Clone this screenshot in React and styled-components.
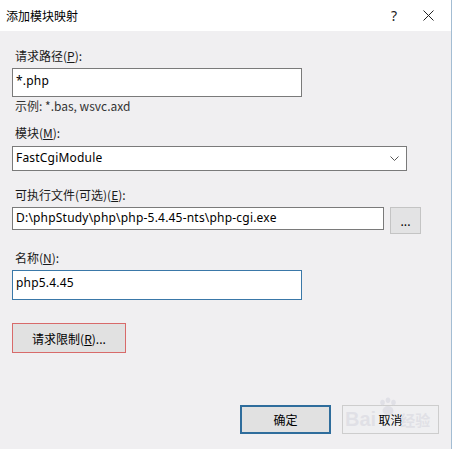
import React from "react";
import styled, { createGlobalStyle } from "styled-components";

const GlobalStyle = createGlobalStyle`
  html, body {
    margin: 0;
    padding: 0;
    background: #ffffff;
  }
  body {
    font-family: "Noto Sans", "Noto Sans CJK SC", sans-serif;
    font-size: 12px;
    color: #000;
  }
`;

const Window = styled.div`
  width: 451px;
  height: 449px;
  background: #f0eff1;
  border-right: 1px solid #a3bdd3;
  display: flex;
  flex-direction: column;
`;

const TitleBar = styled.div`
  height: 31px;
  background: #ffffff;
  display: flex;
  align-items: center;
  padding-left: 6px;
  box-sizing: border-box;
`;

const Title = styled.div`
  flex: 1;
  font-size: 12px;
  font-family: "Noto Sans CJK SC", sans-serif;
`;

const TitleButton = styled.div`
  width: ${(p) => p.$w}px;
  display: flex;
  justify-content: center;
  font-size: 14px;
  color: #222;
`;

const Body = styled.div`
  padding-left: 12px;
  display: flex;
  flex-direction: column;
  align-items: flex-start;
`;

const Label = styled.div`
  margin-top: ${(p) => p.$top}px;
  padding-left: 3px;
  line-height: 16px;
  font-family: "Noto Sans CJK SC", sans-serif;
  color: #1a1a1a;
  u {
    text-decoration: underline;
  }
`;

const Hint = styled(Label)`
  color: #333;
`;

const Field = styled.div`
  margin-top: ${(p) => p.$top || 0}px;
  width: ${(p) => p.$w}px;
  height: ${(p) => p.$h}px;
  box-sizing: border-box;
  background: #fff;
  border: 1px solid ${(p) => (p.$focus ? "#3a78a8" : "#7a7a7a")};
  padding: ${(p) => p.$pt || 3}px 0 0 3px;
  line-height: 16px;
  white-space: nowrap;
  display: flex;
  align-items: flex-start;
`;

const FieldText = styled.span`
  flex: 1;
  letter-spacing: 0.2px;
`;

const Chevron = styled.svg`
  width: 9px;
  height: 6px;
  margin: 6px 7px 0 0;
`;

const Row = styled.div`
  margin-top: ${(p) => p.$top}px;
  display: flex;
  align-items: flex-start;
  gap: 6px;
`;

const Button = styled.div`
  margin-top: ${(p) => p.$top || 0}px;
  width: ${(p) => p.$w}px;
  height: ${(p) => p.$h}px;
  box-sizing: border-box;
  background: ${(p) => p.$bg || "#e1e1e1"};
  border: ${(p) => p.$bw || 1}px solid ${(p) => p.$border || "#adadad"};
  display: flex;
  align-items: center;
  justify-content: center;
  font-family: "Noto Sans CJK SC", sans-serif;
  color: ${(p) => p.$color || "#000"};
  position: relative;
`;

const Footer = styled.div`
  margin-top: 52px;
  padding-left: 240px;
  display: flex;
  gap: 11px;
`;

const Watermark = styled.div`
  position: absolute;
  inset: 0;
  display: flex;
  align-items: center;
  padding-left: 2px;
  font-family: "Liberation Sans", sans-serif;
  font-weight: bold;
  font-size: 20px;
  color: rgba(222, 222, 228, 0.85);
  pointer-events: none;
  span {
    margin-left: 24px;
    font-size: 15px;
    font-family: "Noto Sans CJK SC", sans-serif;
  }
`;

const Paw = styled.svg`
  position: absolute;
  left: 34px;
  top: -9px;
  width: 22px;
  height: 20px;
`;

export default function App() {
  return (
    <>
      <GlobalStyle />
      <Window>
        <TitleBar>
          <Title>添加模块映射</Title>
          <TitleButton $w={22}>?</TitleButton>
          <TitleButton $w={46}>
            <svg width="11" height="11" viewBox="0 0 11 11">
              <path d="M0.5 0.5 L10.5 10.5 M10.5 0.5 L0.5 10.5" stroke="#222" strokeWidth="1" />
            </svg>
          </TitleButton>
        </TitleBar>
        <Body>
          <Label $top={17}>
            请求路径(<u>P</u>):
          </Label>
          <Field $top={4} $w={290} $h={29} $pt={4}>
            <FieldText>*.php</FieldText>
          </Field>
          <Hint $top={1}>示例: *.bas, wsvc.axd</Hint>
          <Label $top={11}>
            模块(<u>M</u>):
          </Label>
          <Field $top={5} $w={395} $h={25} $pt={3}>
            <FieldText>FastCgiModule</FieldText>
            <Chevron viewBox="0 0 9 6">
              <polyline points="0.5,0.5 4.5,4.5 8.5,0.5" fill="none" stroke="#555" strokeWidth="1" />
            </Chevron>
          </Field>
          <Label $top={16}>
            可执行文件(可选)(<u>E</u>):
          </Label>
          <Row $top={4}>
            <Field $w={372} $h={23} $pt={2}>
              <FieldText>D:\phpStudy\php\php-5.4.45-nts\php-cgi.exe</FieldText>
            </Field>
            <Button $w={31} $h={27} $border="#c4c4c4" $bg="#e3e3e4">
              ...
            </Button>
          </Row>
          <Label $top={16}>
            名称(<u>N</u>):
          </Label>
          <Field $top={4} $w={290} $h={30} $pt={4} $focus>
            <FieldText>php5.4.45</FieldText>
          </Field>
          <Button $top={23} $w={114} $h={30} $border="#d86a6a">
            请求限制(<u>R</u>)...
          </Button>
        </Body>
        <Footer>
          <Button $w={91} $h={29} $bw={2} $border="#2f6d9c">
            确定
          </Button>
          <Button $w={97} $h={29} $border="#cdcdcd" $bg="#efeff1">
            取消
            <Watermark>
              Bai<span>经验</span>
            </Watermark>
            <Paw viewBox="0 0 24 22">
              <g fill="rgba(222,222,228,0.9)">
                <ellipse cx="6" cy="6" rx="2.5" ry="3" />
                <ellipse cx="12" cy="3.5" rx="2.5" ry="3" />
                <ellipse cx="18" cy="6" rx="2.5" ry="3" />
                <ellipse cx="12" cy="15" rx="6" ry="5" />
              </g>
            </Paw>
          </Button>
        </Footer>
      </Window>
    </>
  );
}
